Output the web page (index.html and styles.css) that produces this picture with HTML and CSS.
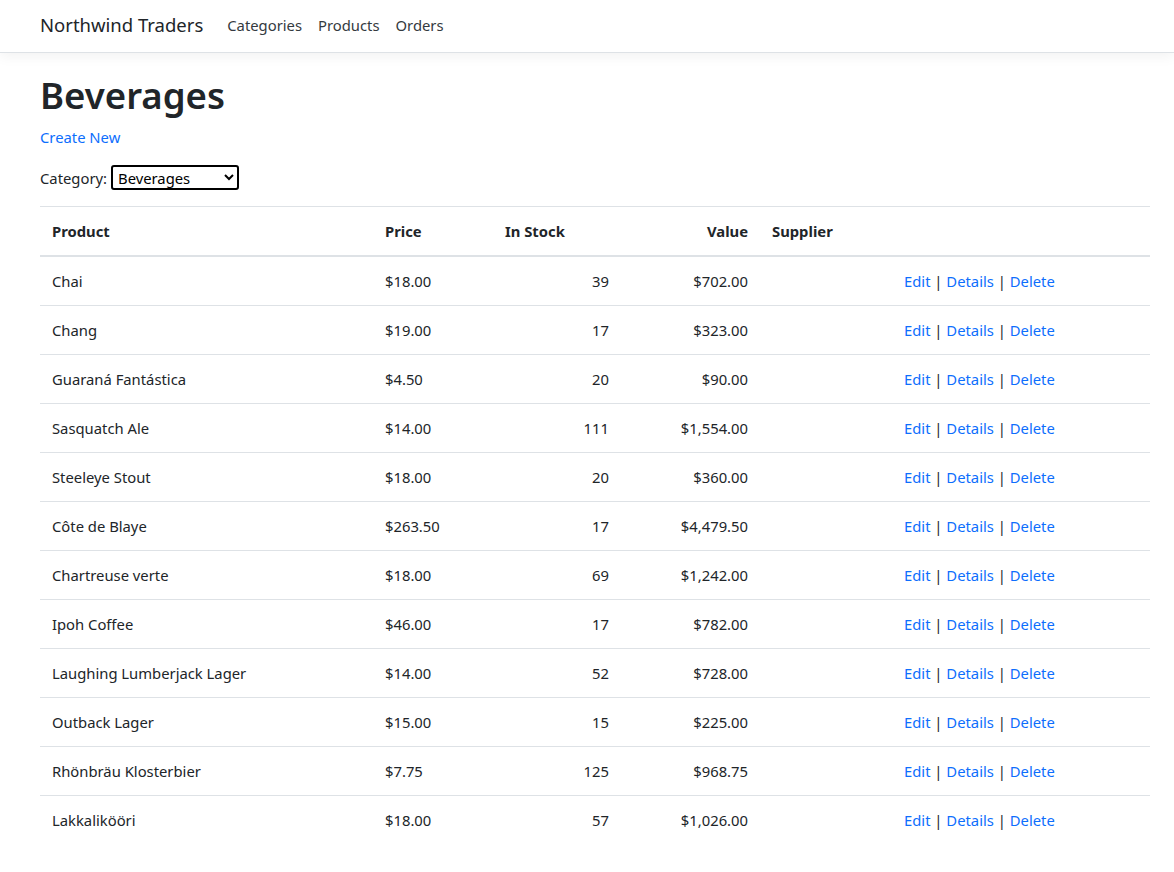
FILE: index.html
```html
<!DOCTYPE html>
<html lang="en">
<head>
<meta charset="utf-8">
<title>Beverages - Northwind Traders</title>
<link rel="stylesheet" href="styles.css">
</head>
<body>
<header class="navbar">
  <div class="nav-inner">
    <a class="brand" href="#">Northwind Traders</a>
    <ul class="nav-links">
      <li><a class="nav-link" href="#">Categories</a></li>
      <li><a class="nav-link" href="#">Products</a></li>
      <li><a class="nav-link" href="#">Orders</a></li>
    </ul>
  </div>
</header>
<main class="container">
  <h1 class="title">Beverages</h1>
  <p class="create"><a href="#">Create New</a></p>
  <div class="filter">
    <label for="cat">Category:</label>
    <select id="cat" class="cat-select">
      <option>Beverages</option>
      <option>Condiments</option>
      <option>Confections</option>
    </select>
  </div>
  <table class="table">
    <colgroup>
      <col class="c-product"><col class="c-price"><col class="c-stock"><col class="c-value"><col class="c-supplier"><col class="c-actions">
    </colgroup>
    <thead>
      <tr><th>Product</th><th>Price</th><th>In Stock</th><th class="right">Value</th><th>Supplier</th><th></th></tr>
    </thead>
    <tbody>
      <tr><td>Chai</td><td>$18.00</td><td class="right">39</td><td class="right">$702.00</td><td></td><td class="actions"><a href="#">Edit</a> | <a href="#">Details</a> | <a href="#">Delete</a></td></tr>
      <tr><td>Chang</td><td>$19.00</td><td class="right">17</td><td class="right">$323.00</td><td></td><td class="actions"><a href="#">Edit</a> | <a href="#">Details</a> | <a href="#">Delete</a></td></tr>
      <tr><td>Guaraná Fantástica</td><td>$4.50</td><td class="right">20</td><td class="right">$90.00</td><td></td><td class="actions"><a href="#">Edit</a> | <a href="#">Details</a> | <a href="#">Delete</a></td></tr>
      <tr><td>Sasquatch Ale</td><td>$14.00</td><td class="right">111</td><td class="right">$1,554.00</td><td></td><td class="actions"><a href="#">Edit</a> | <a href="#">Details</a> | <a href="#">Delete</a></td></tr>
      <tr><td>Steeleye Stout</td><td>$18.00</td><td class="right">20</td><td class="right">$360.00</td><td></td><td class="actions"><a href="#">Edit</a> | <a href="#">Details</a> | <a href="#">Delete</a></td></tr>
      <tr><td>Côte de Blaye</td><td>$263.50</td><td class="right">17</td><td class="right">$4,479.50</td><td></td><td class="actions"><a href="#">Edit</a> | <a href="#">Details</a> | <a href="#">Delete</a></td></tr>
      <tr><td>Chartreuse verte</td><td>$18.00</td><td class="right">69</td><td class="right">$1,242.00</td><td></td><td class="actions"><a href="#">Edit</a> | <a href="#">Details</a> | <a href="#">Delete</a></td></tr>
      <tr><td>Ipoh Coffee</td><td>$46.00</td><td class="right">17</td><td class="right">$782.00</td><td></td><td class="actions"><a href="#">Edit</a> | <a href="#">Details</a> | <a href="#">Delete</a></td></tr>
      <tr><td>Laughing Lumberjack Lager</td><td>$14.00</td><td class="right">52</td><td class="right">$728.00</td><td></td><td class="actions"><a href="#">Edit</a> | <a href="#">Details</a> | <a href="#">Delete</a></td></tr>
      <tr><td>Outback Lager</td><td>$15.00</td><td class="right">15</td><td class="right">$225.00</td><td></td><td class="actions"><a href="#">Edit</a> | <a href="#">Details</a> | <a href="#">Delete</a></td></tr>
      <tr><td>Rhönbräu Klosterbier</td><td>$7.75</td><td class="right">125</td><td class="right">$968.75</td><td></td><td class="actions"><a href="#">Edit</a> | <a href="#">Details</a> | <a href="#">Delete</a></td></tr>
      <tr><td>Lakkalikööri</td><td>$18.00</td><td class="right">57</td><td class="right">$1,026.00</td><td></td><td class="actions"><a href="#">Edit</a> | <a href="#">Details</a> | <a href="#">Delete</a></td></tr>
    </tbody>
  </table>
</main>
</body>
</html>
```
FILE: styles.css
```css
* { box-sizing: border-box; }
html, body { margin: 0; padding: 0; }
body {
  font-family: "Noto Sans", "Open Sans", sans-serif;
  font-size: 14.8px;
  line-height: 24px;
  color: #212529;
  background: #fff;
}
a { color: #0d6efd; text-decoration: none; }

.navbar {
  height: 53px;
  background: #fff;
  border-bottom: 1px solid #dee2e6;
  box-shadow: 0 4px 12px rgba(0, 0, 0, 0.05);
}
.nav-inner {
  display: flex;
  align-items: center;
  height: 52px;
  padding: 0 24px 3px 40px;
}
.brand {
  font-size: 18.5px;
  line-height: 30px;
  color: #212529;
  margin-right: 16px;
}
.nav-links {
  display: flex;
  list-style: none;
  margin: 0;
  padding: 0;
}
.nav-link {
  display: block;
  padding: 8px;
  color: #343a40;
}

.container {
  padding: 0 24px 0 40px;
}
.title {
  font-size: 36.6px;
  font-weight: 600;
  line-height: 48px;
  margin: 18px 0 6px;
}
.create { margin: 0 0 16px; line-height: 24px; }
.filter {
  display: flex;
  align-items: center;
  gap: 4px;
  height: 25px;
  margin-bottom: 16px;
}
.cat-select {
  width: 128px;
  height: 25px;
  font-family: inherit;
  font-size: 14.8px;
  color: #000;
  border: 2px solid #000;
  border-radius: 3px;
  background: #fff;
  padding: 0 1px;
}

.table {
  width: 100%;
  border-collapse: collapse;
  table-layout: fixed;
}
.c-product { width: 333px; }
.c-price { width: 120px; }
.c-stock { width: 128px; }
.c-value { width: 139px; }
.c-supplier { width: 132px; }
.c-actions { width: 258px; }
.table th, .table td {
  padding: 12px;
  line-height: 24px;
  text-align: left;
  vertical-align: top;
  border-top: 1px solid #dee2e6;
  white-space: nowrap;
}
.table th { font-weight: 700; border-bottom: 2px solid #dee2e6; }
.table tbody tr:first-child td { border-top: none; }
.table .right { text-align: right; }
```
